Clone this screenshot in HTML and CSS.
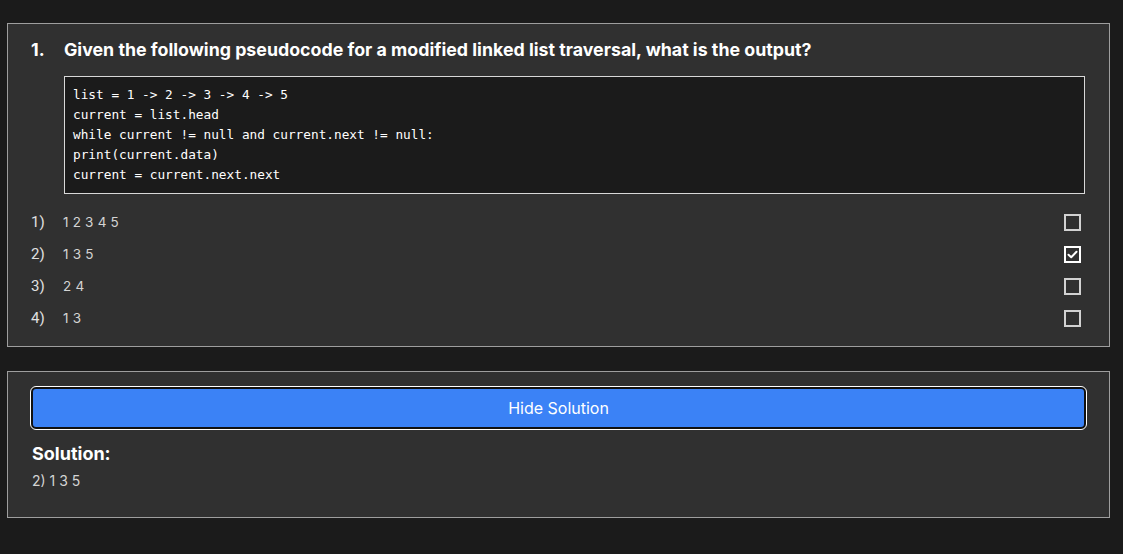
FILE: index.html
```html
<!DOCTYPE html>
<html>
<head>
<meta charset="utf-8">
<link rel="stylesheet" href="styles.css">
</head>
<body>
<div class="page">
  <section class="card question">
    <h2 class="q-title"><span class="q-num">1.</span><span>Given the following pseudocode for a modified linked list traversal, what is the output?</span></h2>
    <pre class="code">list = 1 -&gt; 2 -&gt; 3 -&gt; 4 -&gt; 5
current = list.head
while current != null and current.next != null:
print(current.data)
current = current.next.next</pre>
    <ul class="options">
      <li class="option"><span class="opt-num">1)</span><span class="opt-text">1 2 3 4 5</span><span class="box"></span></li>
      <li class="option"><span class="opt-num">2)</span><span class="opt-text">1 3 5</span><span class="box checked"><svg viewBox="0 0 17 17" width="17" height="17"><path d="M4.5 8.8 L7.2 11.3 L12.5 5.8" fill="none" stroke="#ffffff" stroke-width="2" stroke-linecap="round" stroke-linejoin="round"/></svg></span></li>
      <li class="option"><span class="opt-num">3)</span><span class="opt-text">2 4</span><span class="box"></span></li>
      <li class="option"><span class="opt-num">4)</span><span class="opt-text">1 3</span><span class="box"></span></li>
    </ul>
  </section>
  <section class="card solution">
    <button class="btn">Hide Solution</button>
    <h3 class="sol-title">Solution:</h3>
    <p class="sol-text">2) 1 3 5</p>
  </section>
</div>
</body>
</html>
```

FILE: styles.css
```css
* { box-sizing: border-box; }
html, body { margin: 0; padding: 0; background: #1b1b1b; }
body { font-family: Inter, "Noto Sans", sans-serif; color: #ffffff; }
.page { padding: 23px 13px 0 7px; display: flex; flex-direction: column; gap: 24px; }
.card { background: #303030; border: 1px solid #9e9e9e; }
.question { padding: 15px 28px 12px 23px; }
.q-title { margin: 0; display: flex; font-size: 17.8px; font-weight: 700; line-height: 22px; color: #ffffff; }
.q-num { width: 33px; }
.code {
  margin: 15px -4px 12px 33px;
  background: #1b1b1b;
  border: 1px solid #d8d8d8;
  padding: 8px 8px 8px 8px;
  font-family: "DejaVu Sans Mono", monospace;
  font-size: 12.75px;
  line-height: 20px;
  color: #ffffff;
}
.options { list-style: none; margin: 0; padding: 0; }
.option { display: flex; align-items: center; height: 32px; }
.opt-num { width: 32px; font-family: Roboto, sans-serif; font-size: 15px; color: #e0e0e0; }
.opt-text { flex: 1; font-size: 13.5px; color: #d4d4d4; letter-spacing: 0.2px; }
.box { width: 17px; height: 17px; border: 2px solid #d2d2d2; display: flex; align-items: center; justify-content: center; }
.box.checked { border-color: #ffffff; }
.box svg { display: block; flex: none; }
.solution { padding: 15px 23px 26px 23px; }
.btn {
  display: block; width: 100%; height: 42px;
  background: #3b82f6; color: #ffffff;
  font-family: Inter, sans-serif; font-size: 16px;
  border: 2px solid #111111; border-radius: 5px;
  outline: 1px solid #ffffff;
  outline-offset: 0;
  cursor: pointer;
}
.sol-title { margin: 13px 0 0 1px; font-size: 18px; font-weight: 700; line-height: 24px; }
.sol-text { margin: 5px 0 0 1px; font-size: 14px; color: #d4d4d4; line-height: 20px; }
```
